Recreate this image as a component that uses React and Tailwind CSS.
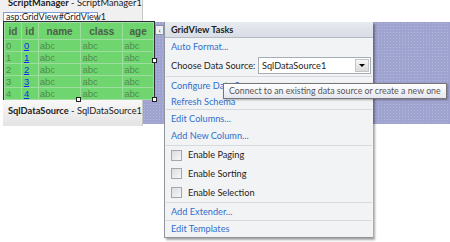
import React from "react";

const F = { fontFamily: 'Lato, "Noto Sans", sans-serif' };

function Link({ children }) {
  return <span className="text-[#2f6fcc]">{children}</span>;
}

function Sep() {
  return <div className="h-px bg-[#d6d9de] mx-[1px]" />;
}

function Check({ label, h }) {
  return (
    <div className={`flex items-center gap-[6px] pl-[6px] ${h}`}>
      <div className="w-[11px] h-[11px] border border-[#a3a6ab] bg-gradient-to-br from-[#dcdde0] to-[#f7f7f8]" />
      <span className="text-[#1e1e1e]">{label}</span>
    </div>
  );
}

function Handle({ className }) {
  return <div className={`absolute w-[5px] h-[5px] bg-white border border-[#222] ${className}`} />;
}

const rows = [0, 1, 2, 3, 4];

export default function App() {
  return (
    <div className="relative w-[450px] h-[242px] bg-white overflow-hidden text-[9.2px]" style={F}>
      <div className="flex">
        {/* left designer column */}
        <div className="w-[143px] flex flex-col">
          <div className="h-[12px] bg-[#f0f0f0] border-r border-[#c8c8c8] overflow-hidden pl-[8px]">
            <div className="-mt-[3px] leading-[12px] text-[9.3px] text-[#222] whitespace-nowrap">
              <span className="font-bold">ScriptManager</span> - ScriptManager1
            </div>
          </div>
          <div className="h-[9px] bg-[#f0f0f0] border-r border-[#c8c8c8] pl-[3px] flex">
            <div className="h-[10px] w-[95px] bg-white border border-[#7d9fd6] text-[9px] leading-[8px] text-[#222] pl-[2px] whitespace-nowrap z-10">
              asp:GridView#GridView1
            </div>
          </div>
          {/* grid */}
          <div className="relative ml-[3px] w-[152px] h-[79px] border border-[#2c2c3c] bg-[#6fd66f] z-10">
            <table className="border-collapse text-[9.5px]" style={{ fontFamily: '"Liberation Sans", Arial, sans-serif' }}>
              <thead>
                <tr className="h-[17px] text-[#4a5e4a] text-[10px]">
                  <th className="w-[17px] border border-[#9fdc9f] font-bold">id</th>
                  <th className="w-[17px] border border-[#9fdc9f] font-bold">id</th>
                  <th className="w-[43px] border border-[#9fdc9f] font-bold">name</th>
                  <th className="w-[42px] border border-[#9fdc9f] font-bold">class</th>
                  <th className="w-[31px] border border-[#9fdc9f] font-bold">age</th>
                </tr>
              </thead>
              <tbody className="text-[#528a52]">
                {rows.map((r) => (
                  <tr key={r} className="h-[12px] leading-[11px]">
                    <td className="border border-[#9fdc9f] pl-[1px]">{r}</td>
                    <td className="border border-[#9fdc9f] pl-[2px]">
                      <span className="text-[#0a2ef0] underline">{r}</span>
                    </td>
                    <td className="border border-[#9fdc9f] pl-[1px]">abc</td>
                    <td className="border border-[#9fdc9f] pl-[1px]">abc</td>
                    <td className="border border-[#9fdc9f] pl-[1px]">abc</td>
                  </tr>
                ))}
              </tbody>
            </table>
            <Handle className="-right-[3px] top-[36px]" />
            <Handle className="-right-[3px] -bottom-[3px]" />
            <Handle className="left-[72px] -bottom-[3px]" />
            <div className="absolute -right-[10px] top-[3px] w-[9px] h-[10px] bg-[#eef0f4] border border-[#8a8fa6] flex items-center justify-center text-[8px] leading-none text-[#333]">
              ‹
            </div>
          </div>
          <div className="h-[26px] bg-gradient-to-b from-[#f8f8f8] to-[#e4e4e4] border-r border-[#c8c8c8] ml-[3px] pl-[5px] pt-[4px] text-[9.3px] text-[#222] whitespace-nowrap">
            <span className="font-bold">SqlDataSource</span> - SqlDataSource1
          </div>
        </div>
        {/* canvas background */}
        <div className="flex-1 flex flex-col">
          <div className="h-[22px] bg-white" />
          <div
            className="h-[102px] bg-[#9fa3cf]"
            style={{
              backgroundImage:
                "radial-gradient(circle, #b4b7dc 0.6px, transparent 0.9px)",
              backgroundSize: "3px 3px",
            }}
          />
        </div>
      </div>

      {/* tasks panel */}
      <div className="absolute left-[164px] top-[22px] w-[209px] h-[216px] bg-[#f2f3f5] border-l border-b border-[#8f949c] shadow-[2px_2px_2px_rgba(0,0,0,0.35)] flex flex-col whitespace-nowrap">
        <div className="h-[16px] bg-gradient-to-b from-[#e7eaef] to-[#d9dde5] border-b border-[#b5bac3] pl-[6px] flex items-center font-bold text-[#1e1e1e]">
          GridView Tasks
        </div>
        <div className="h-[17px] pl-[6px] flex items-center"><Link>Auto Format...</Link></div>
        <div className="h-[21px] pl-[6px] flex items-center">
          <span className="text-[#1e1e1e] w-[87px]">Choose Data Source:</span>
          <div className="flex h-[17px] w-[113px] border border-[#a8acb3] bg-white">
            <div className="flex-1 pl-[3px] leading-[15px] text-[#1e1e1e]">SqlDataSource1</div>
            <div className="w-[14px] m-[1px] border border-[#c2c5ca] bg-gradient-to-b from-[#f7f7f7] to-[#dadada] flex items-center justify-center">
              <div className="w-0 h-0 border-l-[3px] border-r-[3px] border-t-[3px] border-l-transparent border-r-transparent border-t-black" />
            </div>
          </div>
        </div>
        <Sep />
        <div className="h-[17px] pl-[6px] flex items-center"><Link>Configure Data Source...</Link></div>
        <div className="h-[15px] pl-[6px] flex items-center"><Link>Refresh Schema</Link></div>
        <Sep />
        <div className="h-[17px] pl-[6px] flex items-center"><Link>Edit Columns...</Link></div>
        <div className="h-[18px] pl-[6px] flex items-center"><Link>Add New Column...</Link></div>
        <Sep />
        <Check label="Enable Paging" h="h-[18px]" />
        <Check label="Enable Sorting" h="h-[19px]" />
        <Check label="Enable Selection" h="h-[19px]" />
        <Sep />
        <div className="h-[17px] pl-[6px] flex items-center"><Link>Add Extender...</Link></div>
        <Sep />
        <div className="h-[16px] pl-[6px] flex items-center"><Link>Edit Templates</Link></div>
      </div>

      {/* tooltip */}
      <div className="absolute left-[223px] top-[83px] w-[224px] h-[16px] border border-[#767676] bg-gradient-to-b from-white to-[#e6e7ef] shadow-[1px_1px_2px_rgba(0,0,0,0.3)] text-[#575757] text-[8.8px] pl-[5px] leading-[14px] whitespace-nowrap">
        Connect to an existing data source or create a new one
      </div>
    </div>
  );
}
